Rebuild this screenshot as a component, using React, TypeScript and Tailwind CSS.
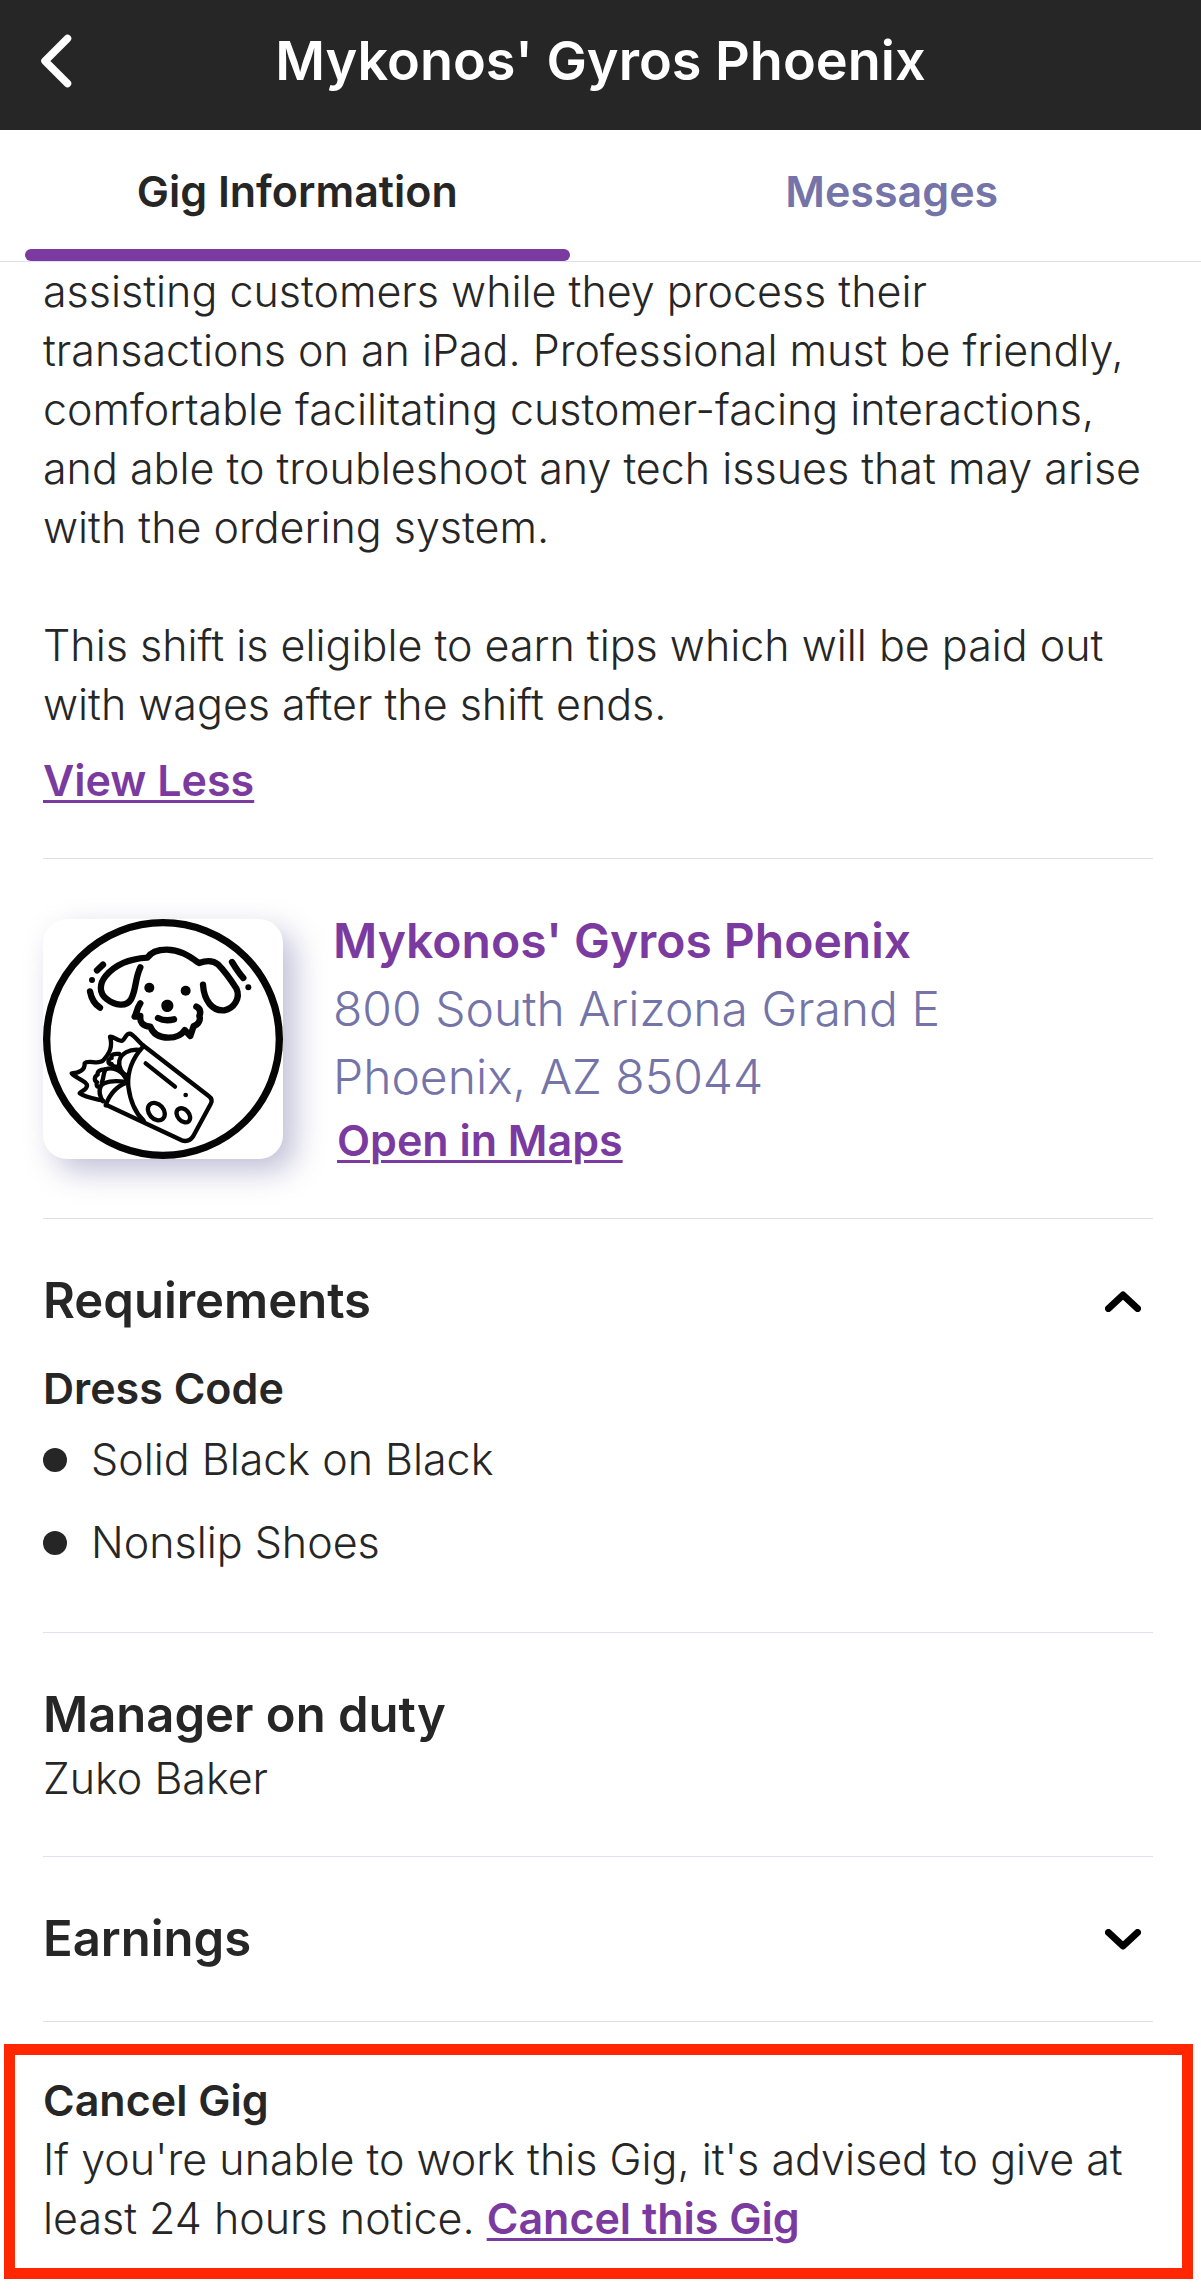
import { useState, type ReactNode } from 'react'

function GyroDogLogo() {
  return (
    <svg
      viewBox="70 87 720 720"
      className="size-60 shrink-0 rounded-3xl bg-white shadow-[12px_12px_30px_rgba(116,116,168,0.45)]"
      fill="none"
      stroke="#050505"
      strokeLinecap="round"
      strokeLinejoin="round"
      role="img"
      aria-label="Mykonos' Gyros logo"
    >
      <circle cx="430" cy="447" r="349" strokeWidth="22" />

      {/* dog head */}
      <g strokeWidth="19">
        <path d="M362 232 C345 268 350 300 334 328 C320 352 285 346 262 328 C236 308 240 280 258 258 C288 222 334 206 383 203 C395 185 415 179 441 179 C482 179 510 200 538 219 C560 211 580 210 596 224 C618 246 634 270 650 295 C664 325 642 356 614 361 C578 364 553 332 550 284" />
        <path d="M362 340 C350 358 352 368 345 380 L362 378 C360 396 368 408 392 410 C400 432 420 443 446 443 C470 443 487 434 495 420 L512 438 L522 408 C536 404 544 390 539 378 C544 366 542 356 530 350" />
        <path d="M415 384 C430 392 448 392 463 388" />
        <path d="M250 224 L232 241" />
        <path d="M211 304 C215 326 224 342 241 353" />
        <path d="M637 216 C648 234 658 250 671 264" />
      </g>
      <g fill="#050505" stroke="none">
        <ellipse cx="389" cy="293" rx="15" ry="15" />
        <ellipse cx="498" cy="302" rx="15" ry="15" />
        <path d="M425 344 C428 324 458 324 461 344 C463 357 452 366 443 366 C433 366 424 357 425 344 Z" />
        <circle cx="217" cy="270" r="9" />
        <circle cx="686" cy="292" r="9" />
      </g>

      {/* wrap */}
      <g strokeWidth="13">
        <path d="M370 466 L567 618 Q581 628 573 642 L521 738 Q508 758 486 751 L262 646" />
        <path d="M370 470 C338 505 322 545 326 590 C332 634 346 668 372 692" />
        <path d="M370 466 C352 450 344 436 332 431 C320 428 318 444 308 452 C294 456 280 436 271 440 C280 470 270 490 250 512 C235 525 205 508 195 520 C196 540 178 550 156 550 C175 568 204 576 202 588 C200 602 184 602 180 610 C196 622 224 626 250 632" />
        <path d="M360 480 C330 476 304 490 299 512 C296 535 308 552 322 556" />
        <path d="M299 492 C284 490 272 494 276 504 C262 508 264 522 276 522 C278 530 290 532 296 528" />
        <path d="M322 574 C312 545 282 528 258 538 C250 548 254 560 246 578" />
        <path d="M256 538 C242 538 232 544 234 554 C222 560 224 574 232 576 C228 586 232 592 240 590" />
        <path d="M318 576 C285 570 250 574 243 590 C236 605 242 622 250 634" />
        <path d="M322 578 C292 588 270 612 258 646" />
        <path d="M378 520 L466 590" />
        <ellipse cx="410" cy="665" rx="22" ry="29" transform="rotate(-42 410 665)" />
        <ellipse cx="491" cy="676" rx="17" ry="24" transform="rotate(-42 491 676)" />
      </g>
      <circle cx="498" cy="615" r="7" fill="#050505" stroke="none" />
    </svg>
  )
}

function Chevron({ open }: { open: boolean }) {
  return (
    <svg
      viewBox="0 0 36 21"
      className="mr-3 h-[21px] w-9"
      fill="none"
      stroke="#000"
      strokeWidth="7"
      strokeLinecap="round"
      strokeLinejoin="round"
      aria-hidden="true"
    >
      <path d={open ? 'M3.5 17.5 L18 4 L32.5 17.5' : 'M3.5 3.5 L18 17 L32.5 3.5'} />
    </svg>
  )
}

interface AccordionProps {
  title: string
  defaultOpen?: boolean
  children?: ReactNode
}

function Accordion({ title, defaultOpen = false, children }: AccordionProps) {
  const [open, setOpen] = useState(defaultOpen)

  return (
    <>
      <h2>
        <button
          type="button"
          aria-expanded={open}
          onClick={() => setOpen(!open)}
          className="flex w-full items-center justify-between text-left text-[49px] leading-[68px] font-semibold"
        >
          {title}
          <Chevron open={open} />
        </button>
      </h2>
      {open && children}
    </>
  )
}

const tabs = ['Gig Information', 'Messages']
const dressCode = ['Solid Black on Black', 'Nonslip Shoes']

const linkClass =
  'font-semibold text-[#7b3aa0] underline decoration-3 underline-offset-4'

export default function App() {
  const [activeTab, setActiveTab] = useState(tabs[0])

  return (
    <div className="min-h-screen bg-white pb-2 font-['Inter',sans-serif] text-[43px] leading-[59px] font-light text-[#262626]">
      <header className="grid h-[130px] grid-cols-[110px_1fr_110px] items-center bg-[#262626] pb-2 text-white">
        <button type="button" aria-label="Back" className="pl-10">
          <svg
            viewBox="0 0 32 54"
            className="h-[54px] w-8"
            fill="none"
            stroke="currentColor"
            strokeWidth="7.5"
            strokeLinejoin="round"
            strokeLinecap="round"
          >
            <path d="M27.5 4.5 L5 27 L27.5 49.5" />
          </svg>
        </button>
        <h1 className="text-center text-[54px] leading-[68px] font-semibold">
          Mykonos' Gyros Phoenix
        </h1>
      </header>

      <nav className="flex border-b border-[#e0e0f0] pr-3">
        {tabs.map(tab => (
          <button
            key={tab}
            type="button"
            onClick={() => setActiveTab(tab)}
            className={`flex-1 px-[25px] pt-8 font-semibold ${
              activeTab === tab ? 'text-[#262626]' : 'text-[#7474a8]'
            }`}
          >
            {tab}
            <span
              className={`mt-7 block h-3 rounded-full ${
                activeTab === tab ? 'bg-[#7b3aa0]' : 'bg-transparent'
              }`}
            />
          </button>
        ))}
      </nav>

      <main>
        <div className="mr-12 ml-[43px] divide-y divide-[#e0e0f0] border-b border-[#e0e0f0]">
          <section className="pb-12">
            <p>
              assisting customers while they process their
              <br />
              transactions on an iPad. Professional must be friendly,
              <br />
              comfortable facilitating customer-facing interactions,
              <br />
              and able to troubleshoot any tech issues that may arise
              <br />
              with the ordering system.
            </p>
            <p className="mt-[59px]">
              This shift is eligible to earn tips which will be paid out
              <br />
              with wages after the shift ends.
            </p>
            <button type="button" className={`mt-[17px] block ${linkClass}`}>
              View Less
            </button>
          </section>

          <section className="flex items-center gap-[50px] py-12">
            <GyroDogLogo />
            <div>
              <h2 className="text-[48px] leading-[68px] font-semibold text-[#7b3aa0]">
                Mykonos' Gyros Phoenix
              </h2>
              <address className="text-[48px] leading-[68px] text-[#7474a8] not-italic">
                800 South Arizona Grand E
                <br />
                Phoenix, AZ 85044
              </address>
              <a href="#maps" className={`ml-1 block w-fit ${linkClass}`}>
                Open in Maps
              </a>
            </div>
          </section>

          <section className="pt-12 pb-[60px]">
            <Accordion title="Requirements" defaultOpen>
              <h3 className="mt-6 font-semibold">Dress Code</h3>
              <ul className="mt-3 space-y-6">
                {dressCode.map(item => (
                  <li key={item} className="flex items-center gap-6">
                    <span className="size-6 rounded-full bg-[#262626]" />
                    {item}
                  </li>
                ))}
              </ul>
            </Accordion>
          </section>

          <section className="py-12">
            <h2 className="text-[49px] leading-[68px] font-semibold">Manager on duty</h2>
            <p>Zuko Baker</p>
          </section>

          <section className="py-12">
            <Accordion title="Earnings" />
          </section>
        </div>

        <section className="mt-[22px] mr-2 ml-1 border-[11px] border-[#ff2600] px-7 pt-4 pb-5">
          <h3 className="font-semibold">Cancel Gig</h3>
          <p>
            If you're unable to work this Gig, it's advised to give at
            <br />
            least 24 hours notice.{' '}
            <a href="#cancel" className={linkClass}>
              Cancel this Gig
            </a>
          </p>
        </section>
      </main>
    </div>
  )
}
